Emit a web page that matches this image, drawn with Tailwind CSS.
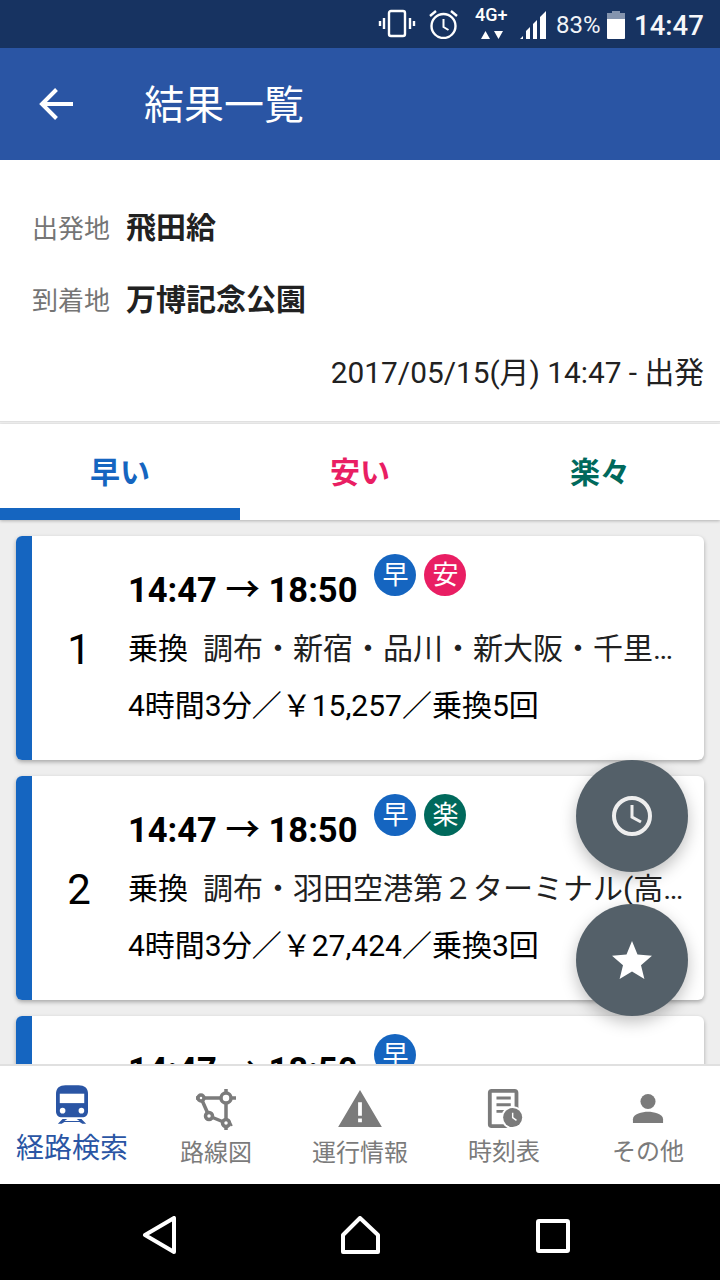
<!DOCTYPE html>
<html lang="ja"><head><meta charset="utf-8">
<script src="https://cdn.jsdelivr.net/npm/@tailwindcss/browser@4"></script></head>
<body class="m-0">
<div class="relative w-[720px] h-[1280px] overflow-hidden flex flex-col bg-[#eeeeee] font-['Roboto','Noto_Sans_CJK_JP',sans-serif] text-[#212121]">
  <div class="h-[48px] shrink-0 bg-[#173361] flex items-center justify-end text-white relative">
    <svg class="absolute left-[378px] top-[9px]" width="38" height="30" viewBox="0 0 38 30" fill="none" stroke="#fff" stroke-width="2.4"><rect x="11" y="2" width="16" height="25" rx="2"/><path d="M6 9v11M2 12v5M32 9v11M36 12v5"/></svg>
    <svg class="absolute left-[428px] top-[9px]" width="32" height="30" viewBox="0 0 32 30" fill="none" stroke="#fff" stroke-width="2.4"><circle cx="15.500" cy="17" r="12"/><path d="M15.500 10v8l5 3" stroke-width="2"/><path d="M2 7l6-5M29 7l-6-5"/></svg>
    <div class="absolute left-[475px] top-[7px] text-[18px] leading-[16px] font-medium">4G+</div>
    <svg class="absolute left-[480px] top-[30px]" width="24" height="10" viewBox="0 0 24 10" fill="#fff"><path d="M1 9l4.500-8L10 9zM14 1h9l-4.500 8z"/></svg>
    <svg class="absolute left-[518px] top-[10px]" width="30" height="30" viewBox="0 0 30 30" fill="#fff"><path d="M2 29l3-3v3zM8 29v-8l4-4v12zM15 29V14l4-4v19zM22 29V7l6-6v28z"/></svg>
    <div class="absolute left-[556px] top-[10px] text-[24px] leading-[30px] text-[#f2f4f8]">83%</div>
    <svg class="absolute left-[606px] top-[11px]" width="20" height="28" viewBox="0 0 20 28"><path d="M6 0h8v2h5v7H1V2h5z" fill="#8494ae"/><path d="M1 8h18v19a1 1 0 0 1-1 1H2a1 1 0 0 1-1-1z" fill="#fff"/></svg>
    <div class="absolute left-[634px] top-[8px] text-[27.500px] leading-[36px] font-medium text-[#f6f7fa]">14:47</div>
  </div>
  <div class="h-[112px] shrink-0 bg-[#2a55a4] flex items-center text-white">
    <svg class="ml-[37px]" width="40" height="40" viewBox="0 0 40 40" fill="none" stroke="#fff" stroke-width="4"><path d="M36 20H6M19.500 5.500L5 20l14.500 14.500"/></svg>
    <div class="ml-[67px] text-[40px] leading-[48px] pt-[3px]">結果一覧</div>
  </div>
  <div class="h-[262px] shrink-0 bg-white pt-[48px] border-b border-[#e0e0e0] relative">
    <div class="flex items-center h-[40px] pl-[32px]"><span class="text-[26px] text-[#757575] w-[94px] pt-[3px]">出発地</span><span class="text-[30px] font-bold pb-[2px]">飛田給</span></div>
    <div class="flex items-center h-[40px] mt-[32px] pl-[32px]"><span class="text-[26px] text-[#757575] w-[94px] pt-[3px]">到着地</span><span class="text-[30px] font-bold pb-[2px]">万博記念公園</span></div>
    <div class="text-right pr-[16px] mt-[33px] text-[29.800px] leading-[40px]">2017/05/15(月) 14:47 - 出発</div>
  </div>
  <div class="mt-[2px] h-[96px] shrink-0 bg-white flex text-[30px] font-bold shadow-[0_1px_3px_rgba(0,0,0,0.25)] relative z-10">
    <div class="w-[240px] border-b-[12px] border-[#1565c0] text-[#1565c0] flex items-center justify-center pt-[12px]">早い</div>
    <div class="w-[240px] text-[#e91e63] flex items-center justify-center">安い</div>
    <div class="w-[240px] text-[#00695c] flex items-center justify-center">楽々</div>
  </div>
  <div class="flex-1 min-h-0 overflow-hidden px-[16px] pt-[16px] flex flex-col gap-[16px]">
    <div class="h-[224px] shrink-0 flex rounded-[6px] overflow-hidden bg-white shadow-[0_2px_4px_rgba(0,0,0,0.3)]">
      <div class="w-[16px] bg-[#1565c0]"></div>
      <div class="w-[64px] pt-[90px] pl-[30px] text-[42px] leading-[48px] text-center text-black">1</div>
      <div class="flex-1 min-w-0 pl-[32px] pr-[16px] pt-[18px]">
        <div class="flex h-[68px]"><span class="text-[34.500px] leading-[40px] mt-[13px] font-bold text-black whitespace-nowrap">14:47 <span class="font-['Noto_Sans_CJK_JP'] font-medium">→</span> 18:50</span><span class="ml-[17px] w-[42px] h-[42px] rounded-full bg-[#1565c0] text-white text-[26px] flex items-center justify-center">早</span><span class="ml-[8px] w-[42px] h-[42px] rounded-full bg-[#e91e63] text-white text-[26px] flex items-center justify-center">安</span></div>
        <div class="text-[30px] leading-[40px] truncate mt-[7px]"><span class="text-black">乗換</span>&nbsp;&nbsp;調布・新宿・品川・新大阪・千里中央</div>
        <div class="text-[30px] leading-[40px] mt-[17px] whitespace-nowrap text-black">4時間3分／￥15,257／乗換5回</div>
      </div>
    </div>
    <div class="h-[224px] shrink-0 flex rounded-[6px] overflow-hidden bg-white shadow-[0_2px_4px_rgba(0,0,0,0.3)]">
      <div class="w-[16px] bg-[#1565c0]"></div>
      <div class="w-[64px] pt-[90px] pl-[30px] text-[42px] leading-[48px] text-center text-black">2</div>
      <div class="flex-1 min-w-0 pl-[32px] pr-[16px] pt-[18px]">
        <div class="flex h-[68px]"><span class="text-[34.500px] leading-[40px] mt-[13px] font-bold text-black whitespace-nowrap">14:47 <span class="font-['Noto_Sans_CJK_JP'] font-medium">→</span> 18:50</span><span class="ml-[17px] w-[42px] h-[42px] rounded-full bg-[#1565c0] text-white text-[26px] flex items-center justify-center">早</span><span class="ml-[8px] w-[42px] h-[42px] rounded-full bg-[#00695c] text-white text-[26px] flex items-center justify-center">楽</span></div>
        <div class="text-[30px] leading-[40px] truncate mt-[7px]"><span class="text-black">乗換</span>&nbsp;&nbsp;調布・羽田空港第２ターミナル(高速バス)</div>
        <div class="text-[30px] leading-[40px] mt-[17px] whitespace-nowrap text-black">4時間3分／￥27,424／乗換3回</div>
      </div>
    </div>
    <div class="h-[224px] shrink-0 flex rounded-[6px] overflow-hidden bg-white shadow-[0_2px_4px_rgba(0,0,0,0.3)]">
      <div class="w-[16px] bg-[#1565c0]"></div>
      <div class="w-[64px]"></div>
      <div class="flex-1 min-w-0 pl-[32px] pr-[16px] pt-[18px]">
        <div class="flex h-[68px]"><span class="text-[34.500px] leading-[40px] mt-[13px] font-bold text-black whitespace-nowrap">14:47 <span class="font-['Noto_Sans_CJK_JP'] font-medium">→</span> 18:50</span><span class="ml-[17px] w-[42px] h-[42px] rounded-full bg-[#1565c0] text-white text-[26px] flex items-center justify-center">早</span></div>
      </div>
    </div>
  </div>
  <div class="h-[120px] shrink-0 bg-white border-t-2 border-[#e0e0e0] flex text-[#7b7b7b] text-[24px] relative z-10">
    <div class="w-[144px] flex flex-col items-center text-[#2a55a4] text-[28px] leading-[36px]">
      <svg class="mt-[19px]" width="32" height="40" viewBox="0 0 34 42"><path d="M10 0h14c6 0 10 3 10 9v19c0 3-2 6-5 6H5c-3 0-5-3-5-6V9C0 3 4 0 10 0z" fill="#2a55a4"/><rect x="4" y="9" width="26" height="10" fill="#fff"/><circle cx="7" cy="27" r="3" fill="#fff"/><circle cx="27" cy="27" r="3" fill="#fff"/><path d="M2 41l5-5h5l-3 2 16 0-3-2h5l5 5h-4l-3-2H9l-3 2z" fill="#2a55a4"/></svg>
      <span class="mt-[6px]">経路検索</span>
    </div>
    <div class="w-[144px] flex flex-col items-center leading-[32px]">
      <svg class="mt-[22px]" width="42" height="42" viewBox="0 0 42 42" fill="none" stroke="#7b7b7b" stroke-width="3.500"><path d="M6 10h25M31 10v25M6 10l8 18M14 28l17 7"/><path d="M1 10h4M36 10h5M31 1v4M31 38v4M35 37l2-1" /><circle cx="31" cy="10" r="5" fill="#fff"/><circle cx="6" cy="10" r="3" fill="#fff"/><circle cx="14" cy="28" r="3.500" fill="#fff"/><circle cx="31" cy="35" r="3.500" fill="#fff"/></svg>
      <span class="mt-[7px]">路線図</span>
    </div>
    <div class="w-[144px] flex flex-col items-center leading-[32px]">
      <svg class="mt-[24px]" width="44" height="38" viewBox="0 0 46 40" fill="#7b7b7b"><path d="M23 0l23 39H0zM21 13v14h4V13zM21 30v4h4v-4z" fill-rule="evenodd"/></svg>
      <span class="mt-[9px]">運行情報</span>
    </div>
    <div class="w-[144px] flex flex-col items-center leading-[32px]">
      <svg class="mt-[23px] ml-[4px]" width="38" height="40" viewBox="0 0 38 42"><rect x="2" y="2" width="28" height="37" rx="2" fill="none" stroke="#7b7b7b" stroke-width="4"/><path d="M9 8h15v3H9zM9 15h15v3H9zM9 22h8v3H9z" fill="#7b7b7b"/><circle cx="26" cy="30" r="12" fill="#fff"/><circle cx="26" cy="30" r="10" fill="#7b7b7b"/><path d="M26 25v5l4 3" stroke="#fff" stroke-width="1.500" fill="none"/></svg>
      <span class="mt-[7px]">時刻表</span>
    </div>
    <div class="w-[144px] flex flex-col items-center leading-[32px]">
      <svg class="mt-[27px]" width="32" height="32" viewBox="0 0 32 34" fill="#7b7b7b"><circle cx="16" cy="9" r="8"/><path d="M0 32v-4c0-6 10-8 16-8s16 2 16 8v4z"/></svg>
      <span class="mt-[11px]">その他</span>
    </div>
  </div>
  <div class="h-[96px] shrink-0 bg-black relative z-10">
    <svg class="absolute left-[142px] top-[32px]" width="36" height="38" viewBox="0 0 36 38" fill="none" stroke="#fff" stroke-width="4" stroke-linejoin="round"><path d="M32 2v34L3 19z"/></svg>
    <svg class="absolute left-[340px] top-[32px]" width="40" height="38" viewBox="0 0 40 38" fill="none" stroke="#fff" stroke-width="4" stroke-linejoin="round"><path d="M20 2L38 19v17H3V19z"/></svg>
    <svg class="absolute left-[536px] top-[35px]" width="34" height="34" viewBox="0 0 34 34" fill="none" stroke="#fff" stroke-width="4" stroke-linejoin="round"><rect x="2" y="2" width="30" height="30" rx="1"/></svg>
  </div>
  <div class="absolute left-[576px] top-[760px] w-[112px] h-[112px] rounded-full bg-[#546069] shadow-[0_6px_16px_rgba(0,0,0,0.25)] flex items-center justify-center z-20">
    <svg width="44" height="44" viewBox="0 0 44 44" fill="none" stroke="#eeeeee" stroke-width="4"><circle cx="22" cy="22" r="18"/><path d="M22 11v12l9 5" stroke-width="3"/></svg>
  </div>
  <div class="absolute left-[576px] top-[904px] w-[112px] h-[112px] rounded-full bg-[#546069] shadow-[0_6px_16px_rgba(0,0,0,0.25)] flex items-center justify-center z-20">
    <svg width="40" height="38" viewBox="0 0 40 38" fill="#fff"><path d="M20 0l5.500 13.500L40 14.700 29 24.200 32.400 38 20 30.500 7.600 38 11 24.200 0 14.700l14.500-1.200z"/></svg>
  </div>
</div>
</body></html>
